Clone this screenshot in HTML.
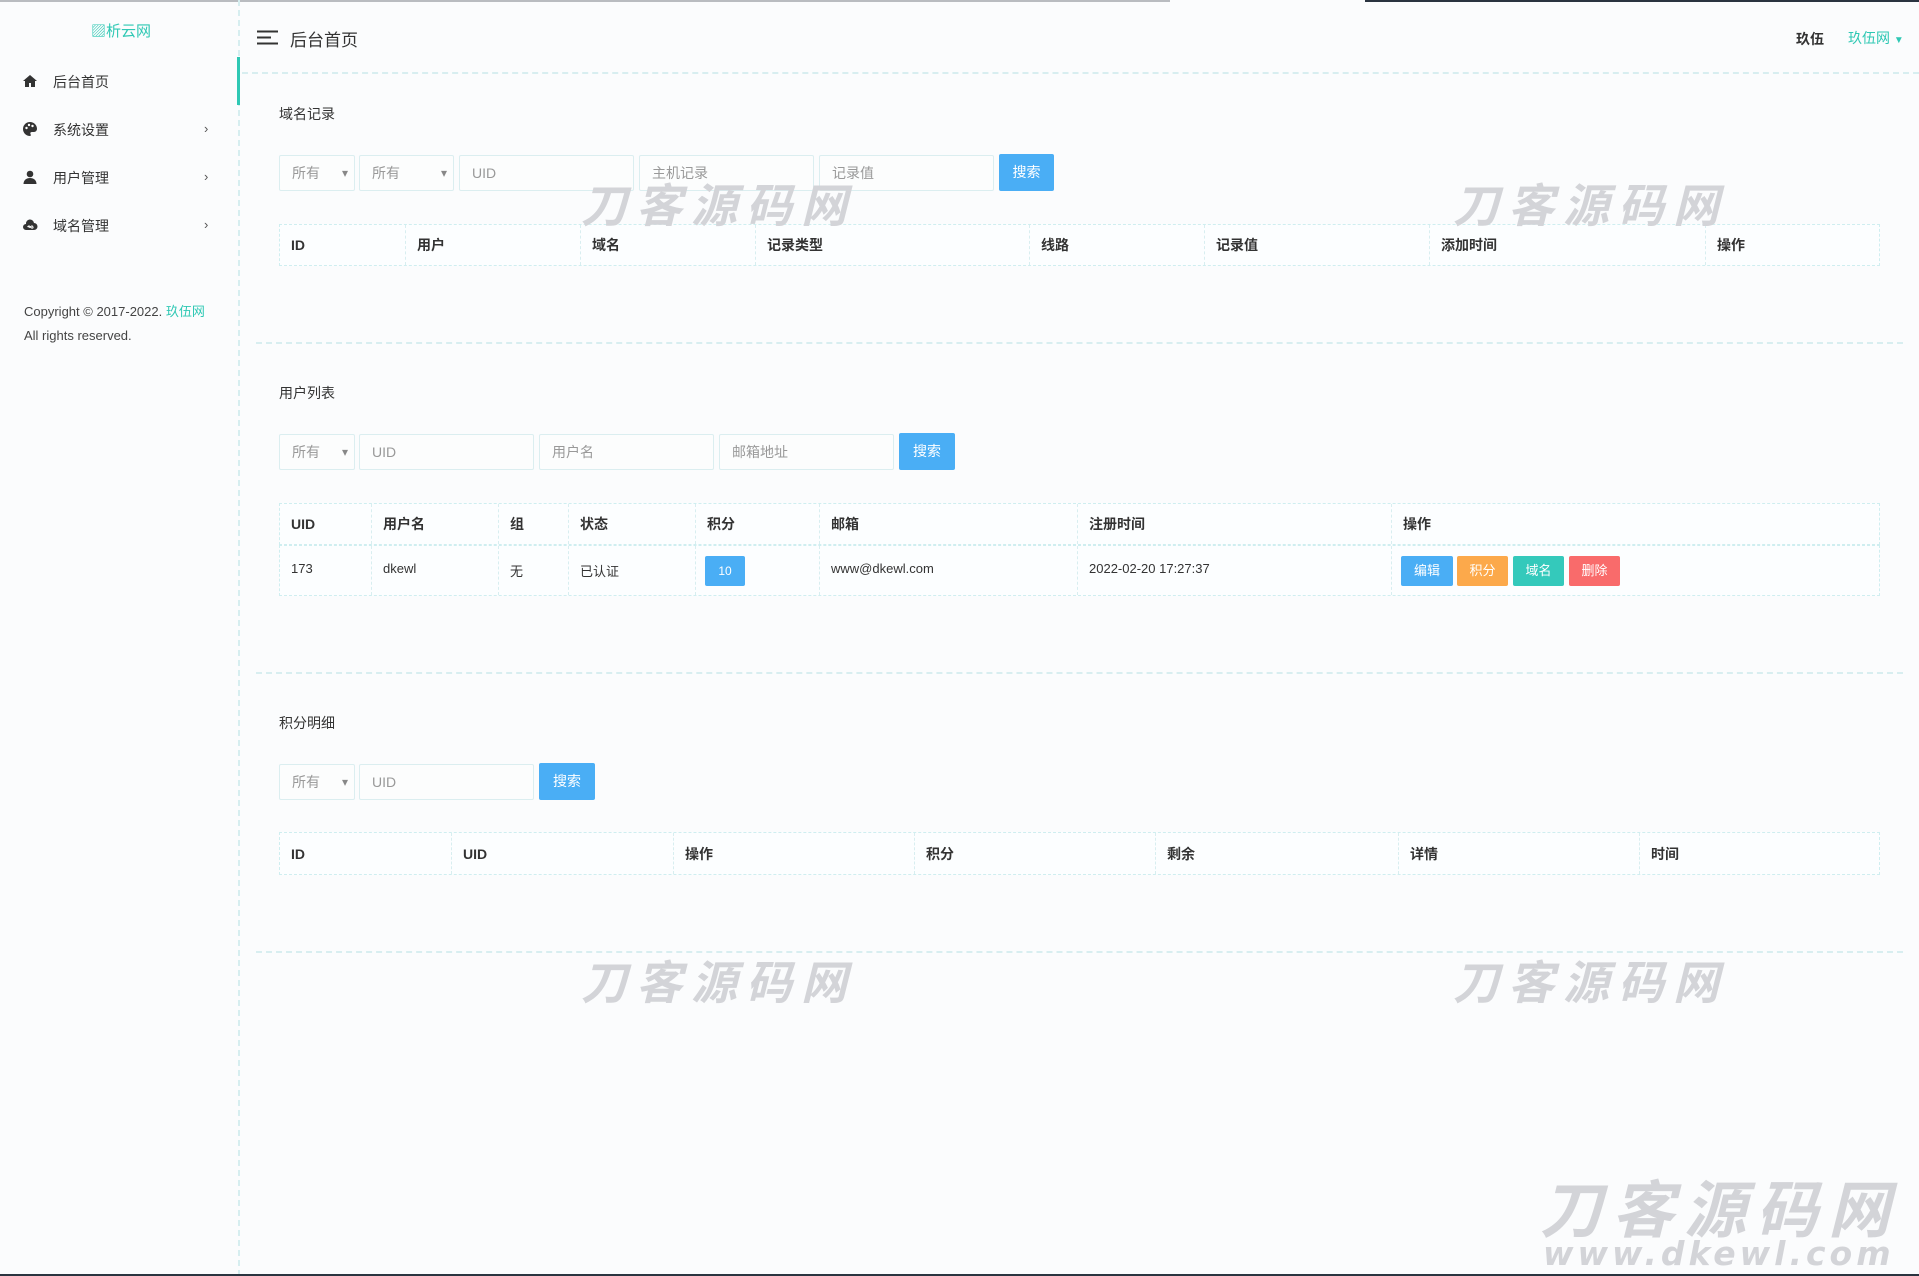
<!DOCTYPE html>
<html><head><meta charset="utf-8"><style>
*{box-sizing:border-box;margin:0;padding:0}
body{width:1919px;height:1276px;position:relative;overflow:hidden;background:#fbfcfd;font-family:"Liberation Sans","Noto Sans CJK SC",sans-serif;color:#333;font-size:14px}
.a{position:absolute}
.top1{left:0;top:0;width:1170px;height:2px;background:#b9bcc0}
.top2{left:1365px;top:0;width:554px;height:2px;background:#2a3440}
.bot{left:0;top:1274px;width:1919px;height:2px;background:#2a3440}
.side{left:0;top:0;width:240px;height:1276px;border-right:2px dashed #d6eef0}
.act{left:237px;top:57px;width:3px;height:48px;background:#2fc8b4}
.mi{left:53px;font-size:14px;color:#333}
.ic{left:22px;width:16px;height:16px}
.chev{left:204px;font-size:13px;color:#555}
.hl{border-top:2px dashed #d8eef0}
.inp{height:36px;border:1px solid #dbeef0;background:#fcfdfd;color:#999;font-size:14px;line-height:34px;padding-left:12px;border-radius:2px}
.sel:after{content:"▾";position:absolute;right:6px;top:0;color:#888;font-size:12px}
.btn{height:37px;background:#4aaef5;color:#fff;text-align:center;line-height:37px;font-size:14px;border-radius:2px}
.th{border:1px dashed #cfeef0;background:#fcfeff}
.th div{position:absolute;top:0;height:100%;border-left:1px dashed #d8eef0;padding-left:11px;font-weight:bold;font-size:14px;display:flex;align-items:center}
.row div{font-weight:normal;font-size:13px}
.wm{font-size:46px;font-weight:bold;font-style:italic;color:#d3d4d8;letter-spacing:9px;font-family:"Noto Sans CJK SC",sans-serif}
.sb{height:30px;color:#fff;text-align:center;line-height:30px;font-size:13px;border-radius:2px}
.title{font-size:14px}
</style></head><body>
<div class="a top1"></div><div class="a top2"></div>
<div class="a side"></div>
<div class="a act"></div>
<div class="a" style="left:91px;top:20px;font-size:15px;color:#2fc8b4">▨析云网</div>

<svg class="a ic" style="top:73px" viewBox="0 0 16 16"><path d="M8 2L1 8h2v6h4v-4h2v4h4V8h2z" fill="#333"/></svg>
<div class="a mi" style="top:72px">后台首页</div>
<svg class="a ic" style="top:121px" viewBox="0 0 16 16"><path d="M8 1a7 7 0 100 14c1 0 1-1 .5-2s0-2 1.5-2h2a3 3 0 003-3c0-4-3-7-7-7z" fill="#333"/><circle cx="4.5" cy="7" r="1.2" fill="#fff"/><circle cx="7" cy="4" r="1.2" fill="#fff"/><circle cx="10.5" cy="5" r="1.2" fill="#fff"/></svg>
<div class="a mi" style="top:120px">系统设置</div><div class="a chev" style="top:121px">›</div>
<svg class="a ic" style="top:169px" viewBox="0 0 16 16"><circle cx="8" cy="5" r="3.3" fill="#333"/><path d="M1.5 15c0-4 3-6 6.5-6s6.5 2 6.5 6z" fill="#333"/></svg>
<div class="a mi" style="top:168px">用户管理</div><div class="a chev" style="top:169px">›</div>
<svg class="a ic" style="top:217px" viewBox="0 0 16 16"><path d="M4 13a3 3 0 010-6 4 4 0 018-1 3.5 3.5 0 010 7z" fill="#333"/><path d="M5.5 10c1-1.5 2 1.5 3 0s2-1.5 2.5 0-1.5 1.5-2.5 0-2-1.5-3 0" stroke="#fff" fill="none"/></svg>
<div class="a mi" style="top:216px">域名管理</div><div class="a chev" style="top:217px">›</div>

<div class="a" style="left:24px;top:300px;font-size:13px;line-height:24px;color:#444">Copyright © 2017-2022. <span style="color:#2fc8b4">玖伍网</span><br>All rights reserved.</div>

<svg class="a" style="left:257px;top:30px" width="21" height="15" viewBox="0 0 21 15"><path d="M0 1.5h21M0 7.5h14M0 13.5h21" stroke="#333" stroke-width="2"/></svg>
<div class="a" style="left:290px;top:26px;font-size:17px">后台首页</div>
<div class="a" style="left:1796px;top:29px;font-size:14px;font-weight:bold">玖伍</div>
<div class="a" style="left:1848px;top:28px;font-size:14px;color:#2fc8b4">玖伍网 <span style="font-size:10px">▼</span></div>
<div class="a hl" style="left:242px;top:72px;width:1677px"></div>

<!-- section 1 -->
<div class="a title" style="left:279px;top:104px">域名记录</div>
<div class="a inp sel" style="left:279px;top:155px;width:76px">所有</div>
<div class="a inp sel" style="left:359px;top:155px;width:95px">所有</div>
<div class="a inp" style="left:459px;top:155px;width:175px">UID</div>
<div class="a inp" style="left:639px;top:155px;width:175px">主机记录</div>
<div class="a inp" style="left:819px;top:155px;width:175px">记录值</div>
<div class="a btn" style="left:999px;top:154px;width:55px">搜索</div>
<div class="a th" style="left:279px;top:224px;width:1601px;height:42px">
<div style="left:0;border:0">ID</div><div style="left:125px">用户</div><div style="left:300px">域名</div><div style="left:475px">记录类型</div><div style="left:749px">线路</div><div style="left:924px">记录值</div><div style="left:1149px">添加时间</div><div style="left:1425px">操作</div></div>
<div class="a hl" style="left:256px;top:342px;width:1647px"></div>

<!-- section 2 -->
<div class="a title" style="left:279px;top:383px">用户列表</div>
<div class="a inp sel" style="left:279px;top:434px;width:76px">所有</div>
<div class="a inp" style="left:359px;top:434px;width:175px">UID</div>
<div class="a inp" style="left:539px;top:434px;width:175px">用户名</div>
<div class="a inp" style="left:719px;top:434px;width:175px">邮箱地址</div>
<div class="a btn" style="left:899px;top:433px;width:56px">搜索</div>
<div class="a th" style="left:279px;top:503px;width:1601px;height:42px">
<div style="left:0;border:0">UID</div><div style="left:91px">用户名</div><div style="left:218px">组</div><div style="left:288px">状态</div><div style="left:415px">积分</div><div style="left:539px">邮箱</div><div style="left:797px">注册时间</div><div style="left:1111px">操作</div></div>
<div class="a th row" style="left:279px;top:545px;width:1601px;height:51px">
<div style="left:0;border:0;align-items:flex-start;padding-top:15px">173</div><div style="left:91px;align-items:flex-start;padding-top:15px">dkewl</div><div style="left:218px;align-items:flex-start;padding-top:15px">无</div><div style="left:288px;align-items:flex-start;padding-top:15px">已认证</div><div style="left:415px"></div><div style="left:539px;align-items:flex-start;padding-top:15px">www@dkewl.com</div><div style="left:797px;align-items:flex-start;padding-top:15px">2022-02-20 17:27:37</div><div style="left:1111px"></div></div>
<div class="a sb" style="left:705px;top:556px;width:40px;background:#4aaef5;font-size:12px">10</div>
<div class="a sb" style="left:1401px;top:556px;width:52px;background:#4aaef5">编辑</div>
<div class="a sb" style="left:1457px;top:556px;width:51px;background:#fca94b">积分</div>
<div class="a sb" style="left:1513px;top:556px;width:51px;background:#34c9bb">域名</div>
<div class="a sb" style="left:1569px;top:556px;width:51px;background:#f96b6b">删除</div>
<div class="a hl" style="left:256px;top:672px;width:1647px"></div>

<!-- section 3 -->
<div class="a title" style="left:279px;top:713px">积分明细</div>
<div class="a inp sel" style="left:279px;top:764px;width:76px">所有</div>
<div class="a inp" style="left:359px;top:764px;width:175px">UID</div>
<div class="a btn" style="left:539px;top:763px;width:56px">搜索</div>
<div class="a th" style="left:279px;top:832px;width:1601px;height:43px">
<div style="left:0;border:0">ID</div><div style="left:171px">UID</div><div style="left:393px">操作</div><div style="left:634px">积分</div><div style="left:875px">剩余</div><div style="left:1118px">详情</div><div style="left:1359px">时间</div></div>
<div class="a hl" style="left:256px;top:951px;width:1647px"></div>

<div class="a wm" style="left:581px;top:170px">刀客源码网</div>
<div class="a wm" style="left:1453px;top:170px">刀客源码网</div>
<div class="a wm" style="left:581px;top:947px">刀客源码网</div>
<div class="a wm" style="left:1453px;top:947px">刀客源码网</div>
<div class="a wm" style="left:1540px;top:1160px;font-size:62px;letter-spacing:10px">刀客源码网</div>
<div class="a" style="left:1543px;top:1236px;font-size:33px;font-weight:bold;font-style:italic;color:#d3d4d8;letter-spacing:4px;font-family:'DejaVu Sans',sans-serif;line-height:36px;white-space:nowrap">www.dkewl.com</div>
<div class="a bot"></div>
</body></html>
